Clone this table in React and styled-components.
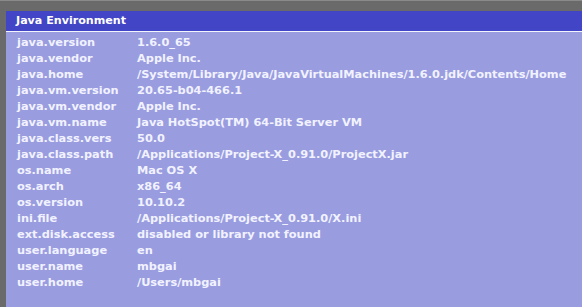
import React from "react";
import styled, { createGlobalStyle } from "styled-components";

const props = [
  ["java.version", "1.6.0_65"],
  ["java.vendor", "Apple Inc."],
  ["java.home", "/System/Library/Java/JavaVirtualMachines/1.6.0.jdk/Contents/Home"],
  ["java.vm.version", "20.65-b04-466.1"],
  ["java.vm.vendor", "Apple Inc."],
  ["java.vm.name", "Java HotSpot(TM) 64-Bit Server VM"],
  ["java.class.vers", "50.0"],
  ["java.class.path", "/Applications/Project-X_0.91.0/ProjectX.jar"],
  ["os.name", "Mac OS X"],
  ["os.arch", "x86_64"],
  ["os.version", "10.10.2"],
  ["ini.file", "/Applications/Project-X_0.91.0/X.ini"],
  ["ext.disk.access", "disabled or library not found"],
  ["user.language", "en"],
  ["user.name", "mbgai"],
  ["user.home", "/Users/mbgai"],
];

export default function App() {
  return (
    <>
      <GlobalStyle />
      <Frame>
        <Panel>
          <Header>Java Environment</Header>
          <Table>
            {props.map(([key, value]) => (
              <Row key={key}>
                <Key>{key}</Key>
                <Value>{value}</Value>
              </Row>
            ))}
          </Table>
        </Panel>
      </Frame>
    </>
  );
}

const GlobalStyle = createGlobalStyle`
  html, body {
    margin: 0;
    padding: 0;
    background: #6a6a6a;
    overflow: hidden;
  }
`;

const Frame = styled.div`
  width: 582px;
  height: 307px;
  box-sizing: border-box;
  padding: 10px 0 0 6px;
  background: #6a6a6a;
  border-top: 1px solid #8a8a8a;
  font-family: "DejaVu Sans", Verdana, sans-serif;
  font-weight: bold;
  font-size: 11.35px;
  color: #f2f2ff;
`;

const Panel = styled.div`
  height: 100%;
  display: flex;
  flex-direction: column;
  background: #999ddf;
`;

const Header = styled.div`
  height: 20px;
  line-height: 20px;
  padding-left: 10px;
  background: #4245c6;
  border-bottom: 1px solid #f4f4ff;
  font-size: 11.1px;
  color: #ffffff;
`;

const Table = styled.div`
  padding: 2px 0 0 11px;
  display: flex;
  flex-direction: column;
`;

const Row = styled.div`
  display: grid;
  grid-template-columns: 120px 1fr;
  line-height: 16px;
  height: 16px;
  white-space: nowrap;
`;

const Key = styled.span``;

const Value = styled.span``;
